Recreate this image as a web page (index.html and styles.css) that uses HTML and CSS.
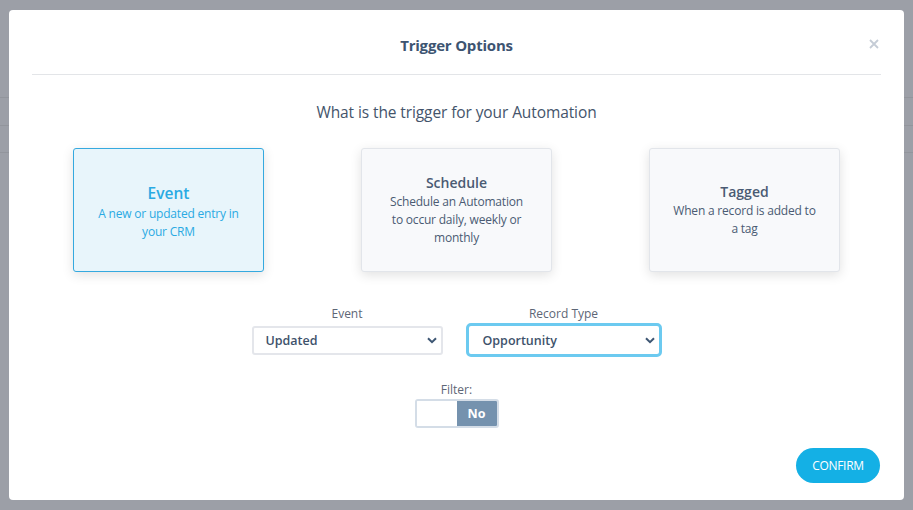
FILE: index.html
```html
<!DOCTYPE html>
<html>
<head>
<meta charset="utf-8">
<link rel="stylesheet" href="styles.css">
</head>
<body>
<div class="backdrop">
  <div class="bg-lines"><span></span><span></span><span></span></div>
  <div class="modal">
    <div class="modal-header">
      <h2 class="title">Trigger Options</h2>
      <svg class="close" width="10" height="10" viewBox="0 0 10 10"><path d="M1 1 L9 9 M9 1 L1 9" stroke="#c5ccd6" stroke-width="1.8" fill="none"/></svg>
    </div>
    <div class="modal-body">
      <p class="question">What is the trigger for your Automation</p>
      <div class="cards">
        <div class="card active">
          <div class="card-title">Event</div>
          <div class="card-desc">A new or updated entry in your CRM</div>
        </div>
        <div class="card">
          <div class="card-title">Schedule</div>
          <div class="card-desc">Schedule an Automation to occur daily, weekly or monthly</div>
        </div>
        <div class="card">
          <div class="card-title">Tagged</div>
          <div class="card-desc">When a record is added to a tag</div>
        </div>
      </div>
      <div class="fields">
        <div class="field">
          <label class="field-label">Event</label>
          <div class="select">
            <span>Updated</span>
            <svg class="chev" width="10" height="7" viewBox="0 0 10 7"><path d="M1 1.2 L5 5.2 L9 1.2" fill="none" stroke="#3d5673" stroke-width="2"/></svg>
          </div>
        </div>
        <div class="field">
          <label class="field-label">Record Type</label>
          <div class="select focused">
            <span>Opportunity</span>
            <svg class="chev" width="10" height="7" viewBox="0 0 10 7"><path d="M1 1.2 L5 5.2 L9 1.2" fill="none" stroke="#3d5673" stroke-width="2"/></svg>
          </div>
        </div>
      </div>
      <div class="filter">
        <div class="field-label">Filter:</div>
        <div class="toggle">
          <span class="toggle-off"></span>
          <span class="toggle-on">No</span>
        </div>
      </div>
    </div>
    <div class="modal-footer">
      <button class="confirm">CONFIRM</button>
    </div>
  </div>
</div>
</body>
</html>
```
FILE: styles.css
```css
html, body {
  margin: 0;
  padding: 0;
}
body {
  font-family: "Open Sans", "Noto Sans", sans-serif;
  background: #9c9fa7;
  width: 913px;
  height: 510px;
  overflow: hidden;
}
.backdrop {
  position: relative;
  width: 913px;
  height: 510px;
  box-sizing: border-box;
  padding: 10px 9px 10px 9px;
}
.bg-lines {
  position: absolute;
  left: 0;
  top: 0;
  width: 913px;
  height: 510px;
}
.bg-lines span {
  position: absolute;
  left: 0;
  right: 0;
  height: 1px;
  background: #92959c;
}
.bg-lines span:nth-child(1) { top: 97px; }
.bg-lines span:nth-child(2) { top: 125px; }
.bg-lines span:nth-child(3) { top: 152px; }
.modal {
  position: relative;
  background: #fff;
  border-radius: 4px;
  height: 490px;
  display: flex;
  flex-direction: column;
  box-sizing: border-box;
}
.modal-header {
  position: relative;
  margin: 0 23px;
  height: 64px;
  border-bottom: 1px solid #e3e5e8;
  display: flex;
  align-items: center;
  justify-content: center;
}
.title {
  margin: 0;
  font-size: 15px;
  font-weight: 700;
  color: #3d5471;
  letter-spacing: -0.2px;
  padding-top: 5px;
}
.close {
  position: absolute;
  right: 2px;
  top: 29px;
}
.modal-body {
  display: flex;
  flex-direction: column;
  align-items: center;
}
.question {
  margin: 25px 0 0;
  font-size: 15.5px;
  color: #44546b;
  line-height: 24px;
  letter-spacing: -0.1px;
}
.cards {
  display: flex;
  gap: 97px;
  margin-top: 24px;
}
.card {
  width: 191px;
  height: 124px;
  box-sizing: border-box;
  border: 1px solid #e2e5ea;
  border-radius: 3px;
  background: #f8f9fb;
  box-shadow: 0 3px 12px rgba(0,0,0,0.12);
  display: flex;
  flex-direction: column;
  justify-content: center;
  align-items: center;
  text-align: center;
  padding: 0 22px;
  color: #4a5b73;
}
.card.active {
  background: #e8f5fb;
  border-color: #35a9df;
  color: #2aaae3;
  padding-top: 2px;
}
.card-title {
  font-size: 14px;
  font-weight: 600;
  line-height: 20px;
  color: #4a5b73;
}
.card.active .card-title {
  color: #2aaae3;
  font-size: 15.5px;
  line-height: 23px;
}
.card-desc {
  font-size: 12px;
  line-height: 18px;
  letter-spacing: -0.2px;
}
.fields {
  display: flex;
  gap: 23px;
  margin-top: 34px;
  align-items: flex-start;
}
.field {
  display: flex;
  flex-direction: column;
  align-items: center;
}
.field-label {
  font-size: 12px;
  color: #5d6676;
  line-height: 16px;
  margin-bottom: 4px;
}
.select {
  width: 191px;
  height: 29px;
  box-sizing: border-box;
  border: 2px solid #e4e6eb;
  border-radius: 3px;
  display: flex;
  align-items: center;
  justify-content: space-between;
  padding: 0 4px 0 12px;
  font-size: 12.5px;
  font-weight: 600;
  color: #3e526b;
}
.select.focused {
  width: 196px;
  height: 34px;
  border: 3px solid #6ccaf0;
  border-radius: 5px;
  padding: 0 4px 0 14px;
  margin-top: -3px;
}
.chev { display: block; }
.filter {
  display: flex;
  flex-direction: column;
  align-items: center;
  margin-top: 25px;
}
.filter .field-label {
  margin-bottom: 1px;
}
.toggle {
  display: flex;
  width: 84px;
  height: 29px;
  box-sizing: border-box;
  border: 2px solid #d4dde7;
  border-radius: 3px;
  overflow: hidden;
}
.toggle-off {
  flex: 1;
  background: #fff;
}
.toggle-on {
  width: 40px;
  background: #7592ae;
  color: #fff;
  font-size: 12.5px;
  font-weight: 700;
  display: flex;
  align-items: center;
  justify-content: center;
}
.modal-footer {
  margin-top: auto;
  display: flex;
  justify-content: flex-end;
  padding: 0 24px 17px 0;
}
.confirm {
  background: #14b0e5;
  color: #fff;
  border: none;
  border-radius: 18px;
  width: 84px;
  height: 35px;
  font-family: "Open Sans", sans-serif;
  font-size: 12px;
  letter-spacing: -0.3px;
  padding: 0;
}
```
